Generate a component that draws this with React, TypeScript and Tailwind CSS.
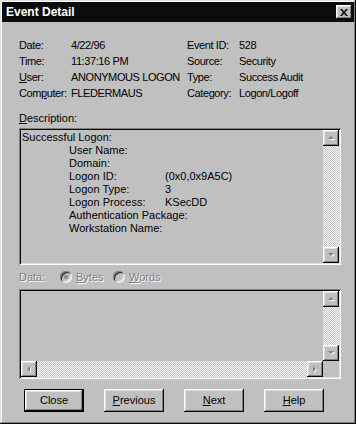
import React from "react";

const raised =
  "bg-[#c0c0c0] shadow-[inset_-1px_-1px_#0a0a0a,inset_1px_1px_#ffffff,inset_-2px_-2px_#808080,inset_2px_2px_#dfdfdf]";
const sunken =
  "shadow-[inset_1px_1px_#808080,inset_-1px_-1px_#ffffff,inset_2px_2px_#0a0a0a,inset_-2px_-2px_#dfdfdf]";
const track =
  "bg-[repeating-conic-gradient(#c0c0c0_0_25%,#ffffff_0_50%)] bg-[length:2px_2px]";

function Arrow({ dir }: { dir: "up" | "down" | "left" | "right" }) {
  const pts = {
    up: "4,1 7,4 1,4",
    down: "1,1 7,1 4,4",
    left: "4,1 4,7 1,4",
    right: "1,1 1,7 4,4",
  }[dir];
  const w = dir === "up" || dir === "down" ? 8 : 5;
  const h = dir === "up" || dir === "down" ? 5 : 8;
  return (
    <div className={`${raised} w-[16px] h-[16px] flex items-center justify-center shrink-0`}>
      <svg width={w + 1} height={h + 1} viewBox={`0 0 ${w + 1} ${h + 1}`}>
        <polygon points={pts} fill="#ffffff" transform="translate(1,1)" />
        <polygon points={pts} fill="#808080" />
      </svg>
    </div>
  );
}

function VScroll() {
  return (
    <div className="flex flex-col w-[16px] h-full">
      <Arrow dir="up" />
      <div className={`flex-1 ${track}`} />
      <Arrow dir="down" />
    </div>
  );
}

function Radio({ checked }: { checked?: boolean }) {
  return (
    <span className="relative inline-block w-[12px] h-[12px] rounded-full bg-[#c0c0c0] shadow-[inset_1px_1px_#808080,inset_-1px_-1px_#ffffff,inset_2px_2px_#0a0a0a,inset_-2px_-2px_#dfdfdf] opacity-80">
      {checked && (
        <span className="absolute left-[4px] top-[4px] w-[4px] h-[4px] rounded-full bg-[#808080]" />
      )}
    </span>
  );
}

function Btn({ children, def }: { children: React.ReactNode; def?: boolean }) {
  return (
    <div
      className={`w-[60px] h-[23px] flex items-center justify-center ${
        def ? "border border-black" : ""
      }`}
    >
      <div className={`${raised} w-full h-full flex items-center justify-center text-[11px]`}>
        {children}
      </div>
    </div>
  );
}

export default function App() {
  const info: [React.ReactNode, string, string, string][] = [
    ["Date:", "4/22/96", "Event ID:", "528"],
    ["Time:", "11:37:16 PM", "Source:", "Security"],
    [<><u>U</u>ser:</>, "ANONYMOUS LOGON", "Type:", "Success Audit"],
    [<>Com<u>p</u>uter:</>, "FLEDERMAUS", "Category:", "Logon/Logoff"],
  ];

  const desc: [string, string][] = [
    ["User Name:", ""],
    ["Domain:", ""],
    ["Logon ID:", "(0x0,0x9A5C)"],
    ["Logon Type:", "3"],
    ["Logon Process:", "KSecDD"],
    ["Authentication Package:", ""],
    ["Workstation Name:", ""],
  ];

  return (
    <div
      className="w-[356px] h-[424px] bg-[#c0c0c0] p-[2px] flex flex-col text-black shadow-[inset_-1px_-1px_#0a0a0a,inset_1px_1px_#dfdfdf,inset_-2px_-2px_#808080,inset_2px_2px_#ffffff]"
      style={{ fontFamily: '"Liberation Sans", Arial, sans-serif' }}
    >
      {/* title bar */}
      <div className="h-[20px] bg-[#0c0c0c] flex items-center justify-between pl-[4px] pr-[2px]">
        <span className="text-white font-bold text-[12px] leading-none">Event Detail</span>
        <div className={`${raised} w-[16px] h-[14px] flex items-center justify-center`}>
          <svg width="8" height="7" viewBox="0 0 8 7">
            <path d="M0 0h2l2 2.5L6 0h2L5 3.5 8 7H6L4 4.5 2 7H0l3-3.5z" fill="#000" />
          </svg>
        </div>
      </div>

      <div className="flex-1 pl-[17px] pr-[13px] pt-[15px] text-[11px]">
        <div className="grid grid-cols-[52px_116px_52px_1fr] leading-[16px] tracking-[-0.4px]">
          {info.map((r, i) => (
            <React.Fragment key={i}>
              <span className="whitespace-nowrap">{r[0]}</span>
              <span className="whitespace-nowrap">{r[1]}</span>
              <span>{r[2]}</span>
              <span>{r[3]}</span>
            </React.Fragment>
          ))}
        </div>

        <div className="mt-[10px] leading-[14px]">
          <u>D</u>escription:
        </div>
        <div className={`mt-[3px] h-[137px] p-[2px] ${sunken} flex`}>
          <div className="flex-1 pl-[1px] pt-[1px] leading-[13px]">
            <div>Successful Logon:</div>
            <div className="pl-[47px] grid grid-cols-[96px_1fr]">
              {desc.map(([k, v]) => (
                <React.Fragment key={k}>
                  <span className="whitespace-nowrap">{k}</span>
                  <span>{v}</span>
                </React.Fragment>
              ))}
            </div>
          </div>
          <VScroll />
        </div>

        <div className="mt-[4px] h-[16px] flex items-center text-[#808080] [text-shadow:1px_1px_#ffffff]">
          <span className="w-[41px]">Data:</span>
          <Radio checked />
          <span className="ml-[4px] w-[37px]">
            <u>B</u>ytes
          </span>
          <Radio />
          <span className="ml-[4px]">
            <u>W</u>ords
          </span>
        </div>

        <div className={`mt-[4px] h-[90px] p-[2px] ${sunken}`}>
          <div className="grid grid-cols-[1fr_16px] grid-rows-[1fr_16px] h-full">
            <div />
            <VScroll />
            <div className="flex h-[16px]">
              <Arrow dir="left" />
              <div className={`flex-1 ${track}`} />
              <Arrow dir="right" />
            </div>
            <div />
          </div>
        </div>

        <div className="mt-[10px] flex gap-[20px] pl-[5px]">
          <Btn def>Close</Btn>
          <Btn>
            <span>
              <u>P</u>revious
            </span>
          </Btn>
          <Btn>
            <span>
              <u>N</u>ext
            </span>
          </Btn>
          <Btn>
            <span>
              <u>H</u>elp
            </span>
          </Btn>
        </div>
      </div>
    </div>
  );
}
